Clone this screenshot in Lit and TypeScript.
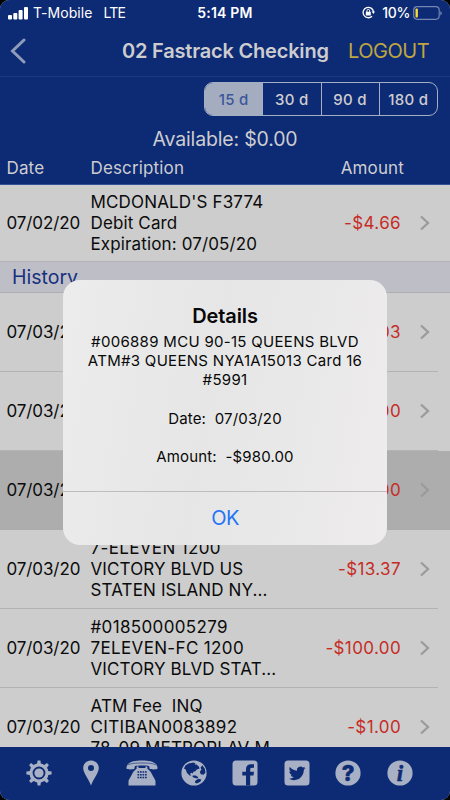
import { LitElement, html, svg, css } from "lit";
import { customElement } from "lit/decorators.js";
import { classMap } from "lit/directives/class-map.js";

interface Entry {
  date: string;
  lines: string[];
  amount: string;
  selected?: boolean;
}

const pending: Entry[] = [
  { date: "07/02/20", lines: ["MCDONALD'S F3774", "Debit Card", "Expiration: 07/05/20"], amount: "-$4.66" },
];

const history: Entry[] = [
  { date: "07/03/20", lines: [], amount: "-$3.03" },
  { date: "07/03/20", lines: [], amount: "-$3.00" },
  { date: "07/03/20", lines: [], amount: "-$980.00", selected: true },
  { date: "07/03/20", lines: ["7-ELEVEN 1200", "VICTORY BLVD US", "STATEN ISLAND NY..."], amount: "-$13.37" },
  { date: "07/03/20", lines: ["#018500005279", "7ELEVEN-FC 1200", "VICTORY BLVD STAT..."], amount: "-$100.00" },
  { date: "07/03/20", lines: ["ATM Fee  INQ", "CITIBAN0083892", "78-09 METROPLAV M"], amount: "-$1.00" },
];

const teeth = [0, 45, 90, 135, 180, 225, 270, 315];

const tabs = [
  // settings
  svg`<g class="ink">${teeth.map((a) => svg`<path d="M11 4.500L11.600 .4H14.400L15 4.500Z" transform="rotate(${a} 13 13)"/>`)}
    <path fill-rule="evenodd" d="M13 3.300a9.700 9.700 0 1 0 0 19.400a9.700 9.700 0 1 0 0-19.400zM13 6.600a6.400 6.400 0 1 1 0 12.800a6.400 6.400 0 1 1 0-12.800z"/>
    <circle cx="13" cy="13" r="4.600"/></g>`,
  // location
  svg`<path class="ink" fill-rule="evenodd" d="M13 .5C8.600 .5 5.200 3.800 5.200 8C5.200 13 10.500 18.500 13 25.500C15.500 18.500 20.800 13 20.800 8C20.800 3.800 17.400 .5 13 .5ZM13 5a3 3 0 1 1 0 6a3 3 0 1 1 0-6Z"/>`,
  // phone
  svg`<path class="ink" d="M-2.500 8.500C-3 3 3 .5 13 .5S29 3 28.500 8.500C28.400 9.700 20.800 9.700 20.500 8.500L20.200 6.200C17 5.400 9 5.400 5.800 6.200L5.500 8.500C5.200 9.700-2.400 9.700-2.500 8.500Z"/>
    <path class="cut thin" d="M-1.500 5C2 3.400 6 3 13 3s11 .4 14.500 2"/>
    <path class="ink" d="M7.600 6.500h2v1.500h6.800V6.500h2v2.300c2 1 4.200 4.200 5.500 7.200c1.500 2.800 2.600 3.800 2.600 5.500v4H-.5v-4c0-1.700 1.100-2.700 2.600-5.500c1.300-3 3.500-6.200 5.500-7.200Z"/>
    <path class="cut keys" d="M8.500 12h9.200M8.500 14.700h9.200M8.500 17.400h9.200" stroke-dasharray="1.700 .8"/>`,
  // web
  svg`<circle class="ink" cx="13" cy="13" r="12.600"/>
    <path class="hole" d="M4.400 5.600L7.500 3.600L12.500 2.500L14.500 3.500L13.500 4.600L15.500 4.400L17.800 6.600L18.600 8.600L15.800 9.400L14 11.500L12.300 11.800L11.800 13.600L10.200 12.700L9 14L10.300 15.500L8.600 15.600L6 13L4.700 9.600L3 8.400Z"/>
    <path class="hole" d="M11.800 15.400L14.700 15.600L17.300 17.300L16.400 18.500L13 17.800L11.400 16.500Z"/>
    <path class="hole" d="M14.600 20.600L17.500 18.800L20.400 19.400L19.300 21.700L15.800 23.600L13.800 22.500Z"/>
    <path class="hole" d="M21.400 5.200L23.800 8.800L24.500 12.500L22.600 14.800L19.800 14.200L18.800 11.800L20.400 9.700L19.600 7.600Z"/>`,
  // facebook
  svg`<rect class="ink" x=".5" y=".5" width="25" height="25" rx="3.500"/>
    <path class="hole" d="M14 25.500V15.600H10.300V11.800H14V9C14 5.800 16 4.200 18.900 4.200H22V7.800H20.200C18.600 7.800 18.200 8.500 18.200 9.700V11.800H22L21.500 15.600H18.200V25.500Z"/>`,
  // twitter
  svg`<rect class="ink" x=".5" y=".5" width="25" height="25" rx="3.500"/>
    <path class="hole" transform="translate(4.700 4.900) scale(.7)" d="M23.953 4.570a10 10 0 01-2.825.775 4.958 4.958 0 002.163-2.723c-.951.555-2.005.959-3.127 1.184a4.920 4.920 0 00-8.384 4.482C7.690 8.095 4.067 6.130 1.640 3.162a4.822 4.822 0 00-.666 2.475c0 1.710.870 3.213 2.188 4.096a4.904 4.904 0 01-2.228-.616v.060a4.923 4.923 0 003.946 4.827 4.996 4.996 0 01-2.212.085 4.936 4.936 0 004.604 3.417 9.867 9.867 0 01-6.102 2.105c-.390 0-.779-.023-1.170-.067a13.995 13.995 0 007.557 2.209c9.053 0 13.998-7.496 13.998-13.985 0-.210 0-.420-.015-.630A9.935 9.935 0 0024 4.590z"/>`,
  // help
  svg`<circle class="ink" cx="13" cy="13" r="12.600"/><text class="mark" x="13" y="20.500">?</text>`,
  // info
  svg`<circle class="ink" cx="13" cy="13" r="12.600"/><text class="mark info" x="13" y="20.800">i</text>`,
];

@customElement("app-root")
export class AppRoot extends LitElement {
  static styles = css`
    :host { display: block; height: 800px; background: #000; font-family: Inter, "Liberation Sans", sans-serif; }
    * { box-sizing: border-box; }
    .screen { position: relative; width: 450px; height: 800px; display: flex; flex-direction: column; overflow: hidden; border-radius: 9px; background: #cdcdcd; color: #0b0b0b; }
    .top { height: 185px; flex: none; background: #0d2a74; color: #cdcdd0; border-bottom: 1px solid #35509a; }
    .status { height: 25px; display: grid; grid-template-columns: 1fr auto 1fr; align-items: center; padding: 0 8px 0 8px; color: #fff; font-size: 14px; font-weight: 500; }
    .carrier { display: flex; align-items: center; font-weight: 400; letter-spacing: .05px; }
    .carrier svg { margin-right: 5px; }
    .lte { margin-left: 11px; letter-spacing: -.7px; }
    .time { font-weight: 600; letter-spacing: .2px; }
    .power { display: flex; align-items: center; justify-content: flex-end; }
    .pct { margin: 0 3px 0 7px; letter-spacing: -.3px; }
    .nav { height: 52px; display: flex; align-items: center; border-bottom: 1px solid #1d3880; padding-left: 10px; }
    .title { margin-left: 96px; width: 226px; font-size: 20px; font-weight: 600; letter-spacing: -.2px; white-space: nowrap; }
    .logout { color: #bfa640; font-size: 20px; letter-spacing: -.5px; }
    .ranges { display: flex; width: 234px; height: 34px; margin: 5px 0 0 204px; border: 1px solid #a4aec4; border-radius: 9px; overflow: hidden; font-size: 15px; font-weight: 500; letter-spacing: .3px; }
    .range { flex: 1; display: grid; place-items: center; border-left: 1.500px solid #a4aec4; }
    .range.on { background: #a4adbf; color: #3b579b; border: 0; }
    .available { text-align: center; margin-top: 11px; height: 24px; line-height: 24px; font-size: 19.500px; letter-spacing: -.17px; }
    .heads { display: grid; grid-template-columns: 84px 1fr auto; padding: 0 46px 0 6.500px; margin-top: 5px; line-height: 24px; font-size: 17px; letter-spacing: .15px; }
    .list { flex: 1; overflow: hidden; }
    .row { height: 79px; display: grid; grid-template-columns: 84px 1fr auto 29px; align-items: center; padding: 0 8px 0 6.500px; margin-right: 12px; border-bottom: 1px solid #b3b3b5; font-size: 17px; white-space: pre; }
    .row.first { height: 77px; margin-right: 0; padding-right: 20px; }
    .row.selected { margin-right: 0; padding-right: 20px; background: #adadad; border-color: #adadad; }
    .desc { line-height: 21.200px; letter-spacing: .13px; padding-top: 1px; }
    .numeric { letter-spacing: .35px; }
    .name { letter-spacing: .16px; }
    .date { letter-spacing: -.1px; }
    .amount { color: #c62c25; letter-spacing: .38px; }
    .chev { width: 10px; height: 16px; fill: none; stroke: #9b9b9e; stroke-width: 2.300; justify-self: end; }
    .section { height: 31px; padding-left: 12px; line-height: 31px; background: #bebfc6; border-bottom: 1px solid #adaeb2; color: #163080; font-size: 19.500px; }
    .tabs { height: 53px; flex: none; background: #0d2a74; display: flex; justify-content: center; gap: 25.600px; padding: 12.500px 11px 0 0; }
    .tab { width: 26px; height: 26px; overflow: visible; }
    .ink { fill: #a7b0c4; }
    .hole { fill: #0d2a74; }
    .cut { fill: none; stroke: #0d2a74; }
    .thin { stroke-width: .6; }
    .keys { stroke-width: 1.500; }
    .mark { fill: #0d2a74; font: 800 22px Inter, sans-serif; text-anchor: middle; stroke: #0d2a74; stroke-width: .5; }
    .info { font: italic 700 23px "Liberation Serif", serif; }
    .dialog { position: absolute; left: 63px; top: 280px; width: 324px; height: 264.500px; border-radius: 17px; background: linear-gradient(100deg, #ececec, #e6e6e6 45%, #eeecec); display: flex; flex-direction: column; text-align: center; color: #080808; }
    .dtitle { margin-top: 24px; line-height: 25px; height: 28px; font-size: 20px; font-weight: 600; letter-spacing: -.1px; }
    .body { flex: 1; white-space: pre; font-size: 15px; line-height: 19.200px; letter-spacing: .15px; }
    .memo { letter-spacing: .3px; }
    .ok { height: 54px; line-height: 53px; border-top: 1px solid #bdbdbf; color: #2475f5; font-size: 20px; letter-spacing: -.6px; }
  `;

  private row(e: Entry, first = false) {
    return html`<div class=${classMap({ row: true, first, selected: !!e.selected })}>
      <span class="date">${e.date}</span>
      <div class="desc">${e.lines.map((l) => html`<div class=${classMap({ numeric: /\d{4}/.test(l), name: l.includes("'") })}>${l}</div>`)}</div>
      <span class="amount">${e.amount}</span>
      <svg class="chev" viewBox="0 0 10 16"><path d="M1 1.500L8 8L1 14.500"/></svg>
    </div>`;
  }

  render() {
    return html`<div class="screen">
      <header class="top">
        <div class="status">
          <div class="carrier">
            <svg width="20" height="14" fill="#fff"><rect y="9" width="4" height="4.500" rx="1"/><rect x="5.300" y="7" width="4" height="6.500" rx="1"/><rect x="10.600" y="4" width="4" height="9.500" rx="1"/><rect x="16" y="1" width="4" height="12.500" rx="1"/></svg>
            <span>T-Mobile</span><span class="lte">LTE</span>
          </div>
          <div class="time">5:14 PM</div>
          <div class="power">
            <svg width="13" height="13" viewBox="0 0 13 13"><path d="M11.500 6A5.200 5.200 0 1 0 10 10.200" fill="none" stroke="#fff" stroke-width="1.300"/><path d="M9.600 5.500h3.400L11.400 8Z" fill="#fff"/><rect x="3.800" y="5.800" width="5" height="3.700" rx=".6" fill="#fff"/><path d="M4.900 6V4.800a1.400 1.400 0 0 1 2.800 0V6" fill="none" stroke="#fff"/></svg>
            <span class="pct">10%</span>
            <svg width="29" height="14"><rect x=".7" y=".7" width="25.500" height="12.600" rx="3.500" fill="none" stroke="#7485b0" stroke-width="1.200"/><rect x="2.500" y="2.500" width="2.400" height="9" rx="1" fill="#fbd937"/><path d="M27.300 5v4.500q1.500-.8 1.500-2.250T27.300 5" fill="#7485b0"/></svg>
          </div>
        </div>
        <nav class="nav">
          <svg width="16" height="26" fill="none" stroke="#8e9bb9" stroke-width="3" stroke-linecap="round"><path d="M14 2L2.500 13L14 24"/></svg>
          <span class="title">02 Fastrack Checking</span>
          <span class="logout">LOGOUT</span>
        </nav>
        <div class="ranges">${["15 d", "30 d", "90 d", "180 d"].map((r, i) => html`<span class=${classMap({ range: true, on: i === 0 })}>${r}</span>`)}</div>
        <div class="available">Available: $0.00</div>
        <div class="heads"><span>Date</span><span>Description</span><span>Amount</span></div>
      </header>
      <main class="list">
        ${pending.map((e) => this.row(e, true))}
        <div class="section">History</div>
        ${history.map((e) => this.row(e))}
      </main>
      <footer class="tabs">${tabs.map((t) => html`<svg class="tab" viewBox="0 0 26 26">${t}</svg>`)}</footer>
      <div class="dialog">
        <div class="dtitle">Details</div>
        <div class="body"><div class="memo">${["#006889 MCU 90-15 QUEENS BLVD", "ATM#3 QUEENS NYA1A15013 Card 16", "#5991"].join("\n")}</div>${["", "Date:  07/03/20", "", "Amount:  -$980.00"].join("\n")}</div>
        <div class="ok">OK</div>
      </div>
    </div>`;
  }
}
